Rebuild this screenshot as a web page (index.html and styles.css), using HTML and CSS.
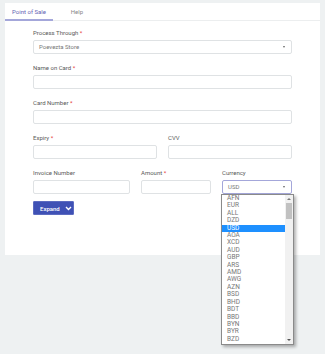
FILE: index.html
```html
<!DOCTYPE html>
<html lang="en">
<head>
  <meta charset="UTF-8">
  <meta name="viewport" content="width=device-width, initial-scale=1.0">
  <title>Point of Sale</title>
  <link rel="stylesheet" href="styles.css">
</head>
<body>
  <div class="card">
    <div class="tabs">
      <div class="tab active">Point of Sale</div>
      <div class="tab">Help</div>
    </div>
    <div class="form">
      <div class="field">
        <label>Process Through <span class="req">*</span></label>
        <div class="input select">Poevezta Store<span class="caret"></span></div>
      </div>
      <div class="field">
        <label>Name on Card <span class="req">*</span></label>
        <div class="input"></div>
      </div>
      <div class="field">
        <label>Card Number <span class="req">*</span></label>
        <div class="input"></div>
      </div>
      <div class="row two">
        <div class="field">
          <label>Expiry <span class="req">*</span></label>
          <div class="input"></div>
        </div>
        <div class="field">
          <label>CVV</label>
          <div class="input"></div>
        </div>
      </div>
      <div class="row three">
        <div class="field">
          <label>Invoice Number</label>
          <div class="input"></div>
        </div>
        <div class="field">
          <label>Amount <span class="req">*</span></label>
          <div class="input"></div>
        </div>
        <div class="field currency">
          <label>Currency</label>
          <div class="input select focus">USD<span class="caret"></span></div>
          <div class="dropdown">
            <ul id="currency-list"></ul>
            <div class="scrollbar">
              <span class="arrow up"></span>
              <span class="thumb"></span>
              <span class="arrow down"></span>
            </div>
          </div>
        </div>
      </div>
      <button class="expand">Expand
        <svg width="7" height="5" viewBox="0 0 7 5"><path d="M1 1 L3.5 3.5 L6 1" fill="none" stroke="#fff" stroke-width="1.4"/></svg>
      </button>
    </div>
  </div>

  <script>
    const currencies = ["AFN", "EUR", "ALL", "DZD", "USD", "AOA", "XCD", "AUD", "GBP", "ARS",
      "AMD", "AWG", "AZN", "BSD", "BHD", "BDT", "BBD", "BYN", "BYR", "BZD"];
    document.getElementById("currency-list").innerHTML = currencies.map(c =>
      `<li class="${c === "USD" ? "selected" : ""}">${c}</li>`
    ).join("");
  </script>
</body>
</html>
```
FILE: styles.css
```css
html {
  height: 100%;
}
body {
  font-family: Roboto, "Liberation Sans", sans-serif;
  background-color: #eef1f2;
  margin: 0;
  padding: 0;
  min-height: 100%;
  color: #555;
}
.card {
  margin: 3px 5px 0;
  height: 252px;
  background: #fff;
}
.tabs {
  display: flex;
  height: 17px;
  border-bottom: 1px solid #eceeef;
}
.tab {
  width: 48px;
  font-size: 6px;
  line-height: 17px;
  text-align: center;
  color: #888;
}
.tab.active {
  color: #5f63b3;
  border-bottom: 2px solid #a4a7da;
  height: 16px;
}
.form {
  padding: 8px 28px 0;
}
.field {
  position: relative;
  margin-bottom: 10px;
}
label {
  display: block;
  font-size: 6px;
  line-height: 8px;
  margin-bottom: 3px;
  color: #5a5a5a;
}
.req {
  color: #e53935;
}
.input {
  box-sizing: border-box;
  height: 14px;
  border: 1px solid #dfe2e4;
  border-radius: 2px;
  font-size: 6px;
  line-height: 12px;
  padding: 0 5px;
  color: #777;
}
.select {
  position: relative;
}
.caret {
  position: absolute;
  right: 6px;
  top: 5px;
  border-left: 1.5px solid transparent;
  border-right: 1.5px solid transparent;
  border-top: 2px solid #666;
}
.input.focus {
  border-color: #a4a7da;
}
.row {
  display: grid;
  gap: 11px;
}
.row.two {
  grid-template-columns: 1fr 1fr;
}
.row.three {
  grid-template-columns: 97px 70px 1fr;
  margin-bottom: -3px;
}
.dropdown {
  position: absolute;
  top: 25px;
  left: -1px;
  width: 71px;
  height: 149px;
  background: #fff;
  border: 1px solid #8a8a8a;
  box-shadow: 2px 2px 3px rgba(0, 0, 0, 0.3);
  display: flex;
  z-index: 2;
}
.dropdown ul {
  list-style: none;
  margin: 0;
  padding: 0;
  flex: 1;
}
.dropdown li {
  font-size: 6.5px;
  line-height: 7.4px;
  padding-left: 5px;
  color: #777;
}
.dropdown li.selected {
  background: #1e90ff;
  color: #fff;
}
.scrollbar {
  position: relative;
  width: 8px;
  background: #f1f1f1;
}
.thumb {
  position: absolute;
  top: 8px;
  left: 1px;
  width: 6px;
  height: 16px;
  background: #c1c1c1;
}
.arrow {
  position: absolute;
  left: 2px;
  border-left: 2px solid transparent;
  border-right: 2px solid transparent;
}
.arrow.up {
  top: 3px;
  border-bottom: 2px solid #777;
}
.arrow.down {
  bottom: 3px;
  border-top: 2px solid #555;
}
.expand {
  display: flex;
  align-items: center;
  gap: 5px;
  height: 14px;
  width: 41px;
  padding: 0 0 0 6px;
  background-color: #3f51b5;
  border: 1px solid #5c6bc0;
  border-radius: 1px;
  color: #fff;
  font-family: Roboto, "Liberation Sans", sans-serif;
  font-size: 6px;
  font-weight: 500;
}
```
